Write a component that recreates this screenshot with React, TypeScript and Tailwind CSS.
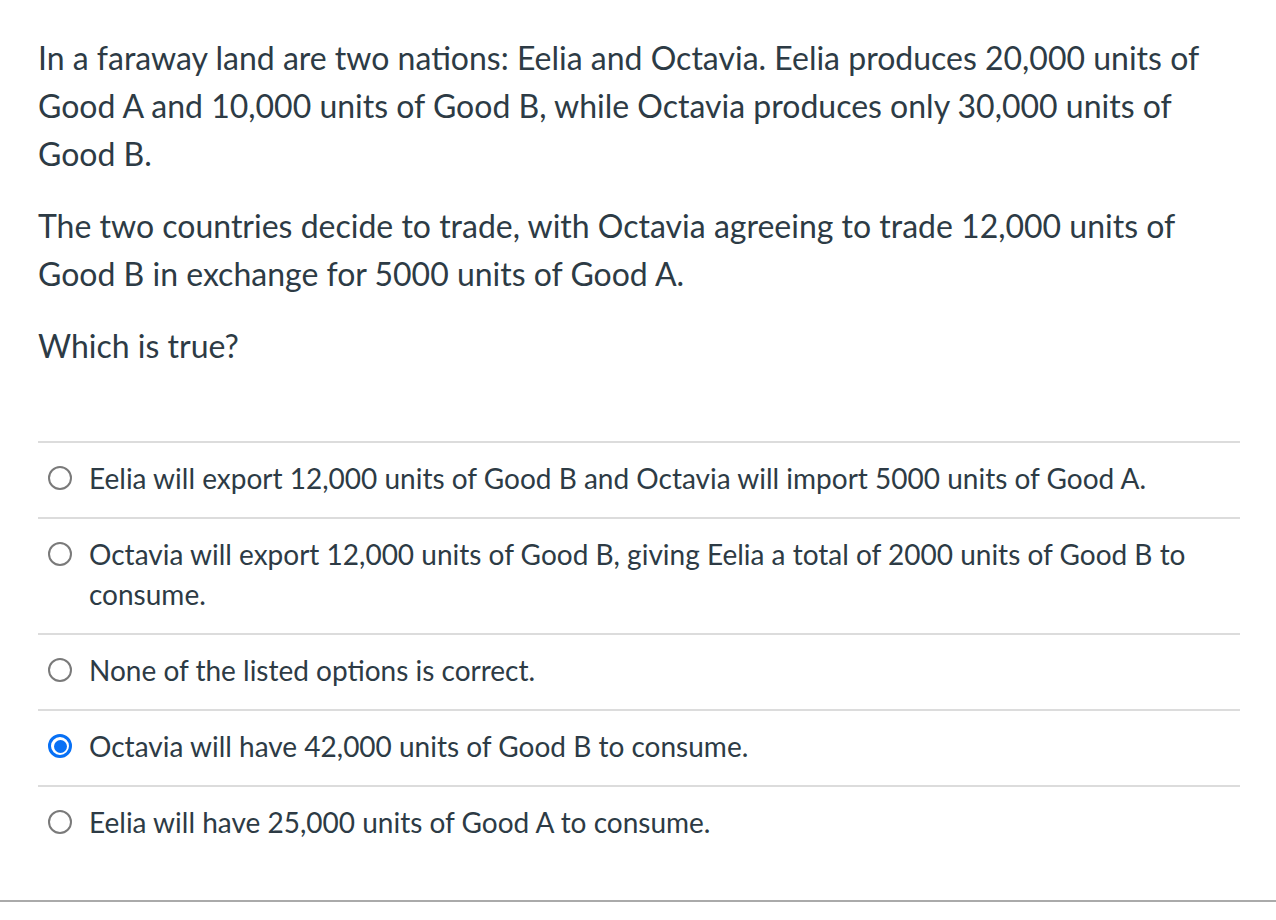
import { useState } from 'react'

const options = [
  'Eelia will export 12,000 units of Good B and Octavia will import 5000 units of Good A.',
  'Octavia will export 12,000 units of Good B, giving Eelia a total of 2000 units of Good B to consume.',
  'None of the listed options is correct.',
  'Octavia will have 42,000 units of Good B to consume.',
  'Eelia will have 25,000 units of Good A to consume.',
]

function Radio({ checked }: { checked: boolean }) {
  if (checked) {
    return (
      <span className="flex h-[24px] w-[24px] shrink-0 items-center justify-center rounded-full border-[3px] border-[#0770f5]">
        <span className="h-[13px] w-[13px] rounded-full bg-[#0770f5]" />
      </span>
    )
  }
  return <span className="h-[24px] w-[24px] shrink-0 rounded-full border-2 border-[#7a7a7a]" />
}

export default function App() {
  const [selected, setSelected] = useState(3)

  return (
    <div className="min-h-[920px] bg-white font-['Lato',sans-serif] text-[#2d3b45]">
      <div className="pl-[38px] pr-[36px] pt-[34px]">
        {/* Question */}
        <div className="text-[32px] leading-[48px]">
          <p className="mb-[24px]">
            In a faraway land are two nations: Eelia and Octavia. Eelia produces 20,000 units of Good A and 10,000
            units of Good B, while Octavia produces only 30,000 units of Good B.
          </p>
          <p className="mb-[24px]">
            The two countries decide to trade, with Octavia agreeing to trade 12,000 units of Good B in exchange for
            5000 units of Good A.
          </p>
          <p>Which is true?</p>
        </div>

        {/* Answers */}
        <div className="mt-[71px] pb-[39px]">
          {options.map((opt, i) => (
            <label
              key={i}
              onClick={() => setSelected(i)}
              className="flex cursor-pointer items-start border-t-2 border-[#dcdcdc] pt-[15px] pb-[19px]"
            >
              <span className="flex h-[40px] w-[51px] shrink-0 items-center pl-[10px]">
                <Radio checked={selected === i} />
              </span>
              <span className="text-[28px] leading-[40px]">{opt}</span>
            </label>
          ))}
        </div>
      </div>
      <div className="h-[2px] bg-[#aaaaaa]" />
    </div>
  )
}
